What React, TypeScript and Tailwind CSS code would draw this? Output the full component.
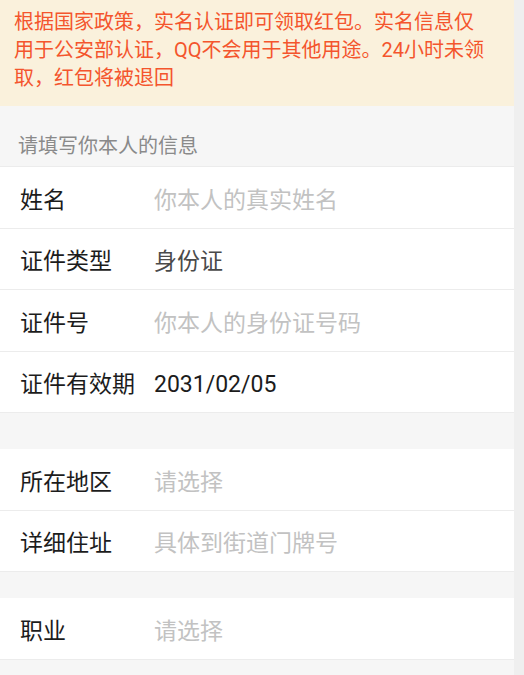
const rows1 = [
  { label: "姓名", value: "你本人的真实姓名", kind: "placeholder" },
  { label: "证件类型", value: "身份证", kind: "muted" },
  { label: "证件号", value: "你本人的身份证号码", kind: "placeholder" },
  { label: "证件有效期", value: "2031/02/05", kind: "filled" },
];

const rows2 = [
  { label: "所在地区", value: "请选择", kind: "placeholder" },
  { label: "详细住址", value: "具体到街道门牌号", kind: "placeholder" },
];

const rows3 = [{ label: "职业", value: "请选择", kind: "placeholder" }];

function Row({ label, value, kind }: { label: string; value: string; kind: string }) {
  const valueColor =
    kind === "placeholder" ? "text-[#c2c2c2]" : kind === "muted" ? "text-[#4a4a4a]" : "text-[#1c1c1c]";
  return (
    <div className="flex h-[61.5px] items-center border-b border-[#ececec] bg-white pt-[7px]">
      <span className="w-[154px] shrink-0 pl-5 text-[23px] text-[#1c1c1c]">{label}</span>
      <span className={`text-[23px] ${valueColor}`}>{value}</span>
    </div>
  );
}

export default function App() {
  return (
    <div
      className="flex min-h-screen bg-[#efefef]"
      style={{ fontFamily: 'Roboto, "Noto Sans CJK SC", sans-serif' }}
    >
      <div className="flex w-[514px] flex-col bg-[#f6f6f6]">
        <div className="h-[106px] bg-[#faf1dc] pl-[14px] pr-[24px] pt-[8px] text-[20px] leading-[28px] text-[#f4552d]">
          根据国家政策，实名认证即可领取红包。实名信息仅用于公安部认证，QQ不会用于其他用途。24小时未领取，红包将被退回
        </div>
        <div className="flex h-[61px] items-end border-b border-[#ececec] pb-[5px] pl-[18px] text-[20px] text-[#8a8a8a]">
          请填写你本人的信息
        </div>
        <div>
          {rows1.map((r) => (
            <Row key={r.label} {...r} />
          ))}
        </div>
        <div className="h-[36px]" />
        <div>
          {rows2.map((r) => (
            <Row key={r.label} {...r} />
          ))}
        </div>
        <div className="h-[26px]" />
        <div>
          {rows3.map((r) => (
            <Row key={r.label} {...r} />
          ))}
        </div>
      </div>
    </div>
  );
}
